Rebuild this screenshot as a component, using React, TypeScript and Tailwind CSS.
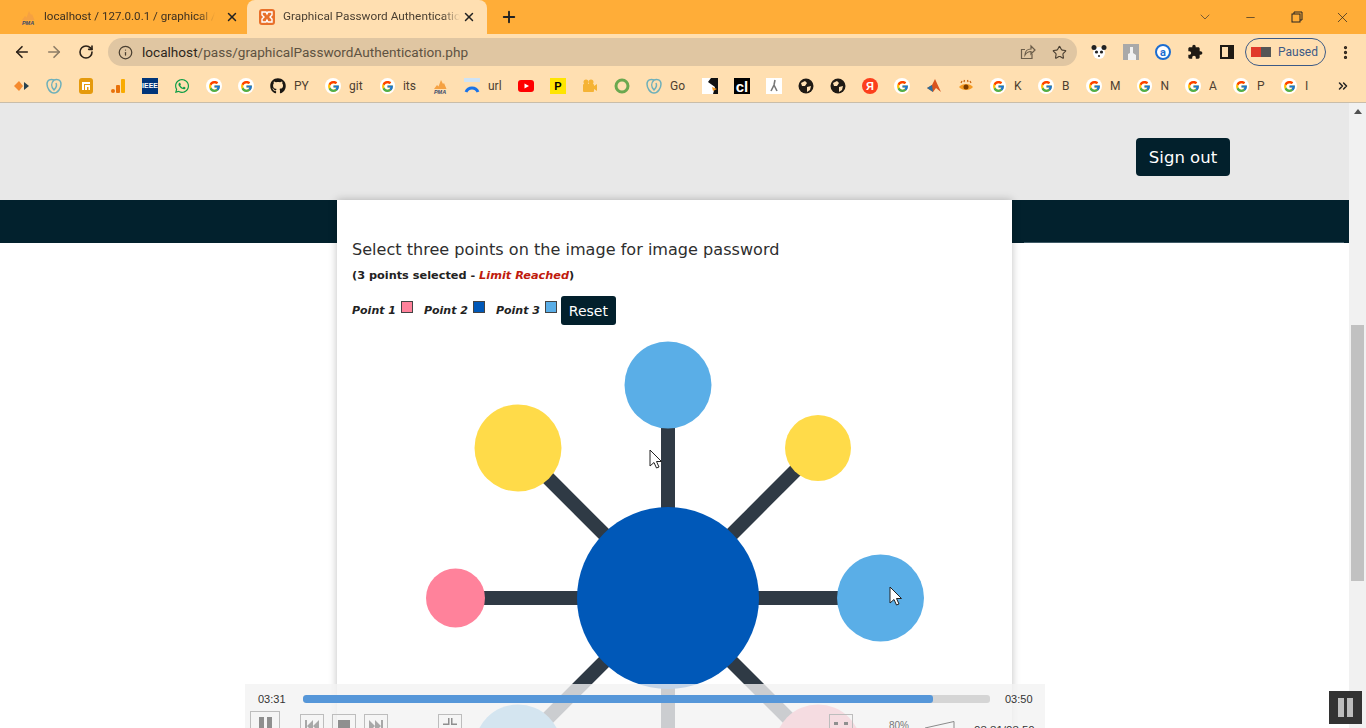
import type { ReactNode } from 'react';
import { ArrowLeft, ArrowRight, RotateCw, Info, Star, Plus, X, ChevronDown, Minus, EllipsisVertical, ChevronsRight } from 'lucide-react';
import { FcGoogle } from 'react-icons/fc';
import { FaGithub, FaWhatsapp } from 'react-icons/fa';

const G = () => (
  <span className="flex h-4 w-4 items-center justify-center rounded-full bg-white">
    <FcGoogle size={13} />
  </span>
);

const Pma = () => (
  <svg viewBox="0 0 16 16" className="h-4 w-4">
    <path d="M2 11 L5 7 L6.5 8.5 L9 2 L11 6 L12 5 L14.5 11 Z" fill="#f5a142" />
    <text x="8" y="15.5" textAnchor="middle" fontSize="5.5" fontWeight="700" fontStyle="italic" fill="#39496b" fontFamily="Liberation Sans, sans-serif">PMA</text>
  </svg>
);

const Globe = () => (
  <svg viewBox="0 0 16 16" className="h-4 w-4">
    <circle cx="8" cy="8" r="7.5" fill="#1f1a14" />
    <path d="M3 5 L7 3 L9 5 L7 8 L4 8 Z M9 9 L13 8 L12 12 L9 14 Z" fill="#ffe0b3" />
  </svg>
);

const Elephant = () => (
  <svg viewBox="0 0 16 16" className="h-4 w-4" fill="none" stroke="#6fb0ba" strokeWidth="1.5">
    <path d="M8 2 C5 0.5 1 2 1 6 C1 10 4 15 8 15 C12 15 15 10 15 6 C15 2 11 0.5 8 2 Z" />
    <path d="M8 2 C5 5 5 9 8 12 C10 10 11 7 10 5" />
  </svg>
);

type Mark = { icon: ReactNode; label?: string; width: string };

const marks: Mark[] = [
  { width: 'w-4', icon: <svg viewBox="0 0 16 16" className="h-4 w-4"><path d="M0 8 L5 3 L9 8 L5 13 Z" fill="#f58a2e" /><path d="M10 4 L15 8 L10 12 Z" fill="#27424f" /></svg> },
  { width: 'w-4', icon: <Elephant /> },
  { width: 'w-4', icon: <svg viewBox="0 0 16 16" className="h-4 w-4"><rect x="1" y="0" width="14" height="16" rx="3" fill="#e59a0c" /><path d="M4 4 H12 V6 H6 V12 H4 Z M7 7 H12 V12 H10.5 V9 H9 V12 H7 Z" fill="#fff" /></svg> },
  { width: 'w-4', icon: <svg viewBox="0 0 16 16" className="h-4 w-4"><rect x="11" y="1" width="4" height="14" rx="1" fill="#f9ab00" /><rect x="6" y="7" width="4" height="8" rx="1" fill="#e8710a" /><circle cx="3" cy="13" r="2" fill="#e8710a" /></svg> },
  { width: 'w-4', icon: <span className="flex h-4 w-4 items-center justify-center bg-[#00357a] font-['Liberation_Sans',sans-serif] text-[7px] font-bold text-white">IEEE</span> },
  { width: 'w-4', icon: <FaWhatsapp size={16} className="text-[#0c9d45]" /> },
  { width: 'w-4', icon: <G /> },
  { width: 'w-4', icon: <G /> },
  { width: 'w-[39px]', label: 'PY', icon: <FaGithub size={16} className="text-[#1b1712]" /> },
  { width: 'w-[39px]', label: 'git', icon: <G /> },
  { width: 'w-9', label: 'its', icon: <G /> },
  { width: 'w-4', icon: <Pma /> },
  { width: 'w-[38px]', label: 'url', icon: <svg viewBox="0 0 16 16" className="h-4 w-4"><rect x="0" y="0" width="16" height="4" fill="#cfe3f5" /><path d="M2 14 A6.5 6.5 0 0 1 14 14" fill="none" stroke="#1a73e8" strokeWidth="3" /></svg> },
  { width: 'w-4', icon: <svg viewBox="0 0 16 16" className="h-4 w-4"><rect x="0" y="2" width="16" height="12" rx="3" fill="#f00" /><path d="M6.5 5.5 L11 8 L6.5 10.5 Z" fill="#fff" /></svg> },
  { width: 'w-4', icon: <span className="flex h-4 w-4 items-center justify-center bg-[#ffe500] font-['Liberation_Sans',sans-serif] text-[11px] font-bold text-black">P</span> },
  { width: 'w-4', icon: <svg viewBox="0 0 16 16" className="h-4 w-4"><rect x="1" y="6" width="11" height="8" rx="1" fill="#f5b335" /><circle cx="4" cy="4" r="2.5" fill="#f5b335" /><circle cx="9" cy="4" r="2.5" fill="#f5b335" /><path d="M12 8 L15 6 V13 L12 11 Z" fill="#f5b335" /></svg> },
  { width: 'w-4', icon: <svg viewBox="0 0 16 16" className="h-4 w-4"><circle cx="8" cy="8" r="6" fill="none" stroke="#6aa84f" strokeWidth="3" /></svg> },
  { width: 'w-10', label: 'Go', icon: <Elephant /> },
  { width: 'w-4', icon: <svg viewBox="0 0 16 16" className="h-4 w-4"><rect width="16" height="16" fill="#fff" /><path d="M9 0 H16 V16 H11 L13 9 L6 4 Z" fill="#111" /><path d="M10 9 L15 11 L11 13 Z" fill="#f59a23" /></svg> },
  { width: 'w-4', icon: <span className="flex h-4 w-4 items-center justify-center bg-black font-['Liberation_Sans',sans-serif] text-[15px] font-bold leading-none text-white">cl</span> },
  { width: 'w-4', icon: <svg viewBox="0 0 16 16" className="h-4 w-4"><rect width="16" height="16" fill="#fff" /><path d="M9 2 L8 7 L5 13 M8 7 L11 13" fill="none" stroke="#777" strokeWidth="1.6" /></svg> },
  { width: 'w-4', icon: <Globe /> },
  { width: 'w-4', icon: <Globe /> },
  { width: 'w-4', icon: <span className="flex h-4 w-4 items-center justify-center rounded-full bg-[#fc3f1d] font-['Liberation_Sans',sans-serif] text-[11px] font-bold text-white">Я</span> },
  { width: 'w-4', icon: <G /> },
  { width: 'w-4', icon: <svg viewBox="0 0 16 16" className="h-4 w-4"><path d="M1 10 L6 7 L9 1 L15 14 L10 10 L7 14 Z" fill="#d9541e" /><path d="M1 10 L6 7 L7 14 Z" fill="#2a6f9e" /></svg> },
  { width: 'w-4', icon: <svg viewBox="0 0 16 16" className="h-4 w-4"><path d="M1 9 C4 5 12 5 15 9 C12 13 4 13 1 9 Z" fill="#f59a23" /><circle cx="8" cy="9" r="2.5" fill="#7a3b00" /><path d="M3 5 L4 3 M6 4 L6.5 2 M10 4 L9.5 2 M13 5 L12 3" stroke="#c9620c" strokeWidth="1.2" /></svg> },
  { width: 'w-8', label: 'K', icon: <G /> },
  { width: 'w-8', label: 'B', icon: <G /> },
  { width: 'w-[35px]', label: 'M', icon: <G /> },
  { width: 'w-8', label: 'N', icon: <G /> },
  { width: 'w-8', label: 'A', icon: <G /> },
  { width: 'w-8', label: 'P', icon: <G /> },
  { width: 'w-8', label: 'I', icon: <G /> },
];

function Tab({ active, title, icon }: { active?: boolean; title: string; icon: ReactNode }) {
  return (
    <div className={active ? 'flex h-[34px] w-[240px] items-center rounded-t-lg bg-[#ffdfb1] pl-3 pr-2 text-[#4a3f31]' : 'flex h-[34px] w-[240px] items-center pl-[13px] pr-2 text-[#3d3020]'}>
      {icon}
      <span className={active ? 'ml-2 w-[177px] overflow-hidden whitespace-nowrap text-[11.8px] [mask-image:linear-gradient(to_right,black_90%,transparent)]' : 'ml-2 w-[171px] overflow-hidden whitespace-nowrap text-[11.6px] [mask-image:linear-gradient(to_right,black_90%,transparent)]'}>
        {title}
      </span>
      <X size={14} strokeWidth={2.5} className={active ? 'ml-[2px] text-[#222]' : 'ml-[10px] text-[#222]'} />
    </div>
  );
}

function Swatch({ color }: { color: string }) {
  return <span className={`ml-[5px] inline-block h-[12px] w-[12px] border border-[#444] align-[1px] ${color}`} />;
}

function PlayerBtn({ cls, children }: { cls: string; children: ReactNode }) {
  return <div className={`flex shrink-0 items-start justify-center border border-[#bdbdbd] ${cls}`}>{children}</div>;
}

function Cursor({ x, y }: { x: number; y: number }) {
  return (
    <path
      transform={`translate(${x} ${y})`}
      d="M0 0 V16 L4 12.5 L6.5 18 L9 17 L6.5 11.5 L11.5 11.5 Z"
      fill="#fff"
      stroke="#222"
      strokeWidth="1"
    />
  );
}

export default function App() {
  return (
    <div className="relative h-[728px] w-[1366px] overflow-hidden bg-white font-['Roboto','Open_Sans',sans-serif]">
      {/* tab strip */}
      <div className="flex h-[34px] items-end bg-[#ffad38]">
        <div className="w-[7px]" />
        <Tab title="localhost / 127.0.0.1 / graphical / users" icon={<Pma />} />
        <Tab
          active
          title="Graphical Password Authentication"
          icon={
            <svg viewBox="0 0 16 16" className="h-4 w-4">
              <rect width="16" height="16" rx="3" fill="#e8702a" />
              <path d="M3 3 H7 L8 5 L9 3 H13 V6 L11 8 L13 10 V13 H9 L8 11 L7 13 H3 V10 L5 8 L3 6 Z" fill="none" stroke="#fff" strokeWidth="1.4" />
            </svg>
          }
        />
        <Plus size={18} strokeWidth={2.5} className="mb-2 ml-[13px] text-[#222]" />
        <div className="ml-auto flex h-full items-center">
          <ChevronDown size={16} strokeWidth={1} className="mr-[31px] text-[#333]" />
          <Minus size={13} strokeWidth={1.2} className="mr-[34px] text-[#222]" />
          <svg viewBox="0 0 12 12" className="mr-[31px] h-3 w-3" fill="none" stroke="#222" strokeWidth="1">
            <rect x="1" y="3" width="8" height="8" />
            <path d="M3 3 V1 H11 V9 H9" />
          </svg>
          <X size={17} strokeWidth={1} className="mr-[15px] text-[#222]" />
        </div>
      </div>

      {/* toolbar */}
      <div className="flex h-9 items-center bg-[#ffdfb1] text-[#2b2118]">
        <ArrowLeft size={18} strokeWidth={2.2} className="ml-[13px]" />
        <ArrowRight size={18} strokeWidth={2.2} className="ml-[14px] text-[#8c7c66]" />
        <RotateCw size={16} strokeWidth={2.4} className="ml-[15px]" />
        <div className="ml-[14px] flex h-7 w-[969px] items-center rounded-full bg-[#e0c6a2]">
          <Info size={15} strokeWidth={2} className="ml-[10px] text-[#4a3f31]" />
          <span className="ml-[9px] text-[13.6px] text-[#2e261c]">
            localhost<span className="text-[#5e5241]">/pass/graphicalPasswordAuthentication.php</span>
          </span>
          <svg viewBox="0 0 16 16" className="ml-auto h-4 w-4" fill="none" stroke="#6b5d49" strokeWidth="1.2">
            <path d="M12 10 V14.5 H1.5 V5.5 H5" />
            <path d="M5 11 C5 7 8 5 11 5 V2 L15 6 L11 10 V7.5 C8.5 7.5 6.5 8.5 5 11 Z" />
          </svg>
          <Star size={15} strokeWidth={1.8} className="ml-[16px] mr-[10px] text-[#4a3f31]" />
        </div>
        <svg viewBox="0 0 16 16" className="ml-[14px] h-4 w-4">
          <ellipse cx="8" cy="9" rx="6" ry="6" fill="#fff" />
          <circle cx="3" cy="3.5" r="2.5" fill="#222" />
          <circle cx="13" cy="3.5" r="2.5" fill="#222" />
          <circle cx="5.5" cy="8" r="1.6" fill="#222" />
          <circle cx="10.5" cy="8" r="1.6" fill="#222" />
          <circle cx="8" cy="12" r="1" fill="#222" />
        </svg>
        <svg viewBox="0 0 16 16" className="ml-4 h-4 w-4">
          <rect width="16" height="16" fill="#a9a9a9" />
          <path d="M5 16 V10 L7 9 V3 H10 V9 L13 11 V16 Z" fill="#f2f2f2" />
        </svg>
        <span className="ml-4 flex h-4 w-4 items-center justify-center rounded-full border-2 border-[#1c6dd0] bg-white text-[11px] font-bold leading-none text-[#1c6dd0]">a</span>
        <svg viewBox="0 0 24 24" className="ml-4 h-4 w-4" fill="#1f1a14">
          <path d="M20.5 11H19V7c0-1.1-.9-2-2-2h-4V3.5C13 2.12 11.88 1 10.5 1S8 2.12 8 3.5V5H4c-1.1 0-1.99.9-1.99 2v3.8H3.5c1.49 0 2.7 1.21 2.7 2.7s-1.21 2.7-2.7 2.7H2V20c0 1.1.9 2 2 2h3.8v-1.5c0-1.49 1.21-2.7 2.7-2.7 1.49 0 2.7 1.21 2.7 2.7V22H17c1.1 0 2-.9 2-2v-4h1.5c1.38 0 2.5-1.12 2.5-2.5S21.88 11 20.5 11z" />
        </svg>
        <span className="ml-[17px] h-[14px] w-[14px] border-2 border-r-[6px] border-[#1f1a14] bg-[#ffdfb1]" />
        <div className="ml-[11px] flex h-7 w-[81px] items-center rounded-full border border-[#3c5a86] pl-[5px]">
          <span className="flex h-[10px] w-[20px] items-center bg-[#555]">
            <span className="h-full w-[10px] bg-[#e0392b]" />
          </span>
          <span className="ml-[7px] text-xs text-[#3c5a86]">Paused</span>
        </div>
        <EllipsisVertical size={17} strokeWidth={2.6} className="ml-[11px]" />
      </div>

      {/* bookmarks */}
      <div className="flex h-[33px] items-center gap-4 border-b border-[#c9bda9] bg-[#ffdfb1] pl-[14px] text-xs text-[#4d4030]">
        {marks.map((m, i) => (
          <div key={i} className={`flex shrink-0 items-center ${m.width}`}>
            {m.icon}
            {m.label && <span className="ml-2">{m.label}</span>}
          </div>
        ))}
        <ChevronsRight size={14} strokeWidth={2.6} className="absolute left-[1336px] text-[#222]" />
      </div>

      {/* page + scrollbar */}
      <div className="flex h-[625px]">
        <div className="w-[1349px] shrink-0 overflow-hidden font-['DejaVu_Sans',sans-serif]">
          <div className="flex h-[97px] items-center justify-end bg-[#e8e8e8] pr-[119px] pt-[11px]">
            <button className="h-[38px] w-[94px] rounded-[4px] bg-[#02202c] pt-[2px] text-[16.5px] text-white">Sign out</button>
          </div>
          <div className="flex h-[43px] items-end justify-end bg-[#02212d] pr-[5px]">
            <div className="h-px w-[320px] bg-[#3f5a66]" />
          </div>
          <div className="relative mx-auto -mt-[43px] h-[700px] w-[675px] bg-white px-[15px] shadow-[0_0_8px_rgba(0,0,0,0.25)]">
            <h3 className="pt-10 text-[16.08px] font-normal leading-5 text-[#2e2e2e]">Select three points on the image for image password</h3>
            <p className="mt-2 text-[11.3px] font-bold leading-4 text-[#222]">
              (3 points selected - <em className="text-[#c01a0c]">Limit Reached</em>)
            </p>
            <div className="mt-3 flex items-center text-[11px] font-bold italic text-[#222]">
              <span>Point 1<Swatch color="bg-[#ff829b]" /></span>
              <span className="ml-[11px]">Point 2<Swatch color="bg-[#0058b8]" /></span>
              <span className="ml-[11px]">Point 3<Swatch color="bg-[#5aaee7]" /></span>
              <button className="ml-[4px] h-[29px] w-[55px] rounded-[3px] bg-[#02202c] text-sm font-normal not-italic text-white">Reset</button>
            </div>
            <svg viewBox="337 340 675 500" className="-ml-[15px] mt-[15px] block h-[500px] w-[675px]">
              <g stroke="#2f3a45" strokeWidth="14">
                <line x1="668" y1="598" x2="668" y2="385" />
                <line x1="668" y1="598" x2="518" y2="448" />
                <line x1="668" y1="598" x2="818" y2="448" />
                <line x1="668" y1="598" x2="455" y2="598" />
                <line x1="668" y1="598" x2="880" y2="598" />
                <line x1="668" y1="598" x2="518" y2="748" />
                <line x1="668" y1="598" x2="818" y2="748" />
                <line x1="668" y1="598" x2="668" y2="810" />
              </g>
              <circle cx="668" cy="385" r="43.5" fill="#5aaee7" />
              <circle cx="518" cy="448" r="43.5" fill="#ffdb49" />
              <circle cx="818" cy="448" r="33" fill="#ffdb49" />
              <circle cx="455.5" cy="598" r="29.5" fill="#ff829b" />
              <circle cx="880.5" cy="598" r="43.5" fill="#5aaee7" />
              <circle cx="518" cy="748" r="43.5" fill="#5aaee7" />
              <circle cx="818" cy="748" r="43.5" fill="#ff829b" />
              <circle cx="668" cy="598" r="91" fill="#0058b8" />
              <Cursor x={650} y={450} />
              <Cursor x={890} y={587} />
            </svg>
          </div>
        </div>
        <div className="flex w-[17px] shrink-0 flex-col items-center bg-[#f1f1f1]">
          <span className="mt-[6px] h-0 w-0 border-x-[4px] border-b-[5px] border-x-transparent border-b-[#505050]" />
          <span className="mt-[211px] h-[256px] w-[13px] bg-[#c1c1c1]" />
        </div>
      </div>

      {/* video player overlay */}
      <div className="absolute left-[245px] top-[684px] h-11 w-[800px] overflow-hidden bg-[rgba(242,242,242,0.8)] font-['Liberation_Sans',sans-serif] text-[#444]">
        <div className="flex h-[28px] items-center pl-[13px] pt-[1px] text-[11px] text-[#333]">
          <span className="w-[45px] pt-[2px]">03:31</span>
          <div className="h-2 w-[687px] overflow-hidden rounded-[3px] bg-[rgba(205,205,205,0.8)]">
            <div className="h-full w-[630px] rounded-[3px] bg-[#4f94d9]/95" />
          </div>
          <span className="ml-[15px] pt-[2px]">03:50</span>
        </div>
        <div className="flex items-start pl-[5px] text-[#9a9a9a]">
          <PlayerBtn cls="h-[30px] w-[30px] -mt-[1px] pt-[5px] gap-[3px]">
            <span className="h-3 w-[5px] bg-[#8f8f8f]" />
            <span className="h-3 w-[5px] bg-[#8f8f8f]" />
          </PlayerBtn>
          <PlayerBtn cls="ml-[20px] mt-[2px] h-6 w-6 pt-[5px]">
            <svg viewBox="0 0 16 12" className="h-3 w-4" fill="#a8a8a8"><path d="M1 0 H3 V12 H1 Z M9 0 V12 L3 6 Z M15 0 V12 L9 6 Z" /></svg>
          </PlayerBtn>
          <PlayerBtn cls="ml-[8px] mt-[2px] h-6 w-6 pt-[5px]"><span className="h-3 w-3 bg-[#8f8f8f]" /></PlayerBtn>
          <PlayerBtn cls="ml-[8px] mt-[2px] h-6 w-6 pt-[5px]">
            <svg viewBox="0 0 16 12" className="h-3 w-4" fill="#a8a8a8"><path d="M1 0 L7 6 L1 12 Z M7 0 L13 6 L7 12 Z M13 0 H15 V12 H13 Z" /></svg>
          </PlayerBtn>
          <PlayerBtn cls="ml-[50px] mt-[2px] h-6 w-6 pt-[3px]">
            <svg viewBox="0 0 16 12" className="h-3 w-4" fill="#8f8f8f"><path d="M6 0 H7.5 V7 H1 V5.5 H6 Z M9 0 H10.5 V5.5 H15 V7 H9 Z" /></svg>
          </PlayerBtn>
          <PlayerBtn cls="ml-[367px] mt-[2px] h-6 w-6 pt-[7px] gap-[6px]">
            <span className="h-[3px] w-[4px] bg-[#8f8f8f]" />
            <span className="h-[3px] w-[4px] bg-[#8f8f8f]" />
          </PlayerBtn>
          <span className="ml-[36px] mt-2 text-[10px] leading-3 text-[#777]">80%</span>
          <svg viewBox="0 0 32 16" className="ml-[15px] mt-[9px] h-4 w-8" fill="none" stroke="#8a8a8a">
            <path d="M1 7 L30 0.5 V16" />
          </svg>
          <span className="ml-[18px] mt-[10px] whitespace-nowrap text-[11.5px] leading-4 text-[#333]">03:31/03:50</span>
        </div>
      </div>

      <div className="absolute left-[1329px] top-[691px] flex h-[33px] w-[33px] items-center justify-center gap-[3px] bg-[#333]">
        <span className="h-[19px] w-[6px] bg-[#bdbdbd]" />
        <span className="h-[19px] w-[6px] bg-[#bdbdbd]" />
      </div>
    </div>
  );
}
